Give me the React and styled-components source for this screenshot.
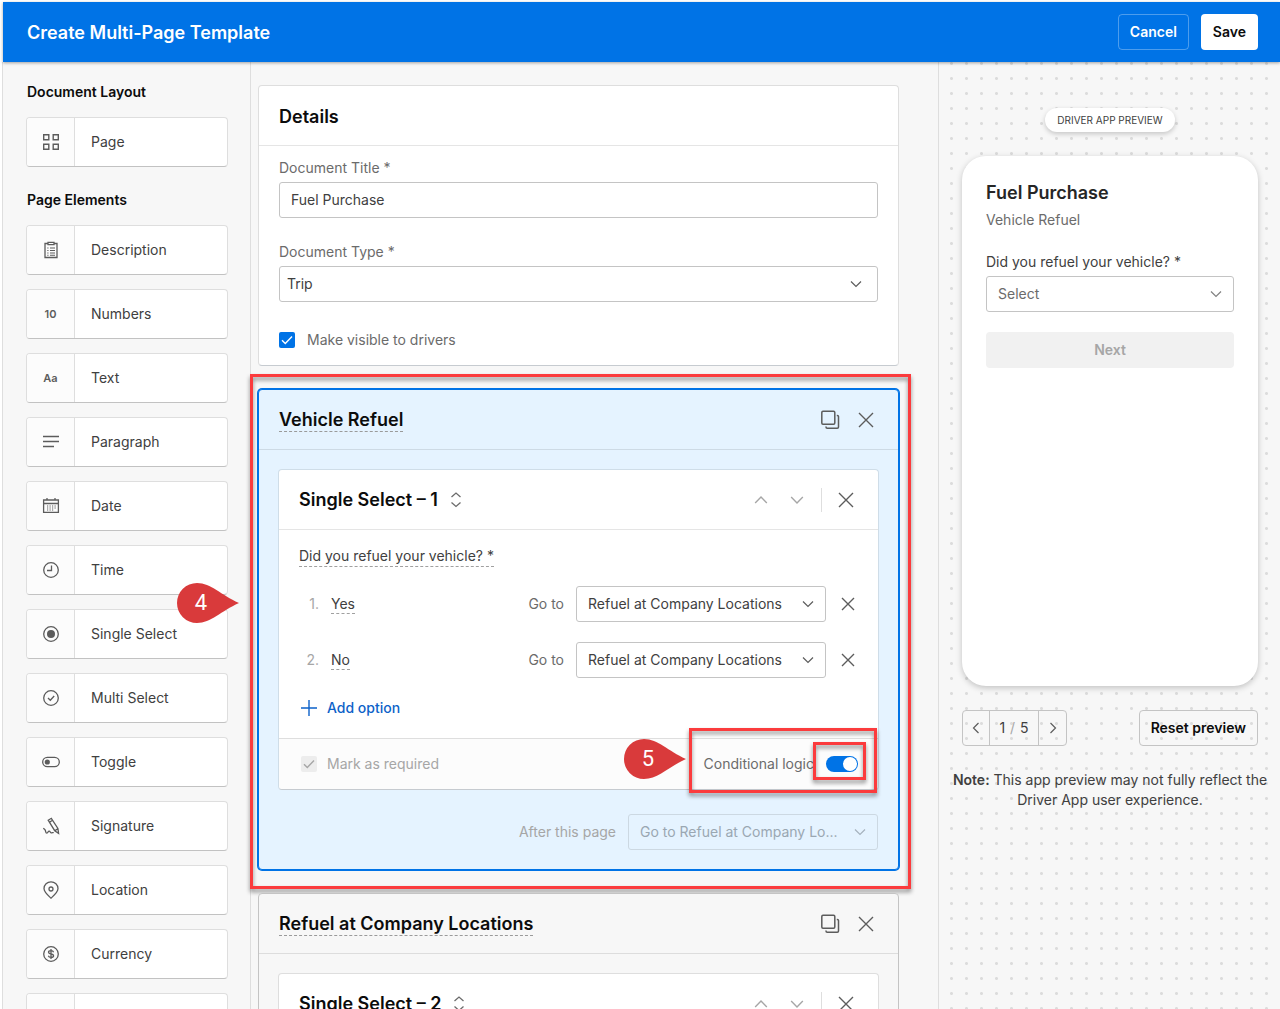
import { useState } from 'react'
import { createGlobalStyle, styled } from 'styled-components'

const colors = {
	blue: '#0073e6',
	link: '#0d62c9',
	tint: '#e5f3ff',
	page: '#f7f7f7',
	line: '#dedede',
	control: '#c4c4c4',
	ink: '#0c0c0c',
	text: '#404040',
	muted: '#6b6b6b',
	faint: '#a6a6a6',
	mark: '#fb3b3d',
}

const GlobalStyle = createGlobalStyle`
	*, *::before, *::after {
		box-sizing: border-box;
	}
	body {
		margin: 0;
		background: #fff;
		color: ${colors.text};
		font: 14px/20px Inter, "Liberation Sans", sans-serif;
	}
	button, input, select {
		font: inherit;
		color: inherit;
	}
	h1, h2, h3, h4, p, ul, ol {
		margin: 0;
		padding: 0;
	}
`

const Shell = styled.div`
	display: flex;
	flex-direction: column;
	height: 100vh;
	padding: 2px 0 0 3px;
	overflow: hidden;
`

const TopBar = styled.header`
	position: relative;
	z-index: 3;
	flex: none;
	display: flex;
	align-items: center;
	gap: 12px;
	height: 60px;
	padding: 0 22px 0 24px;
	background: ${colors.blue};
	box-shadow: 0 1px 3px hsla(0, 0%, 0%, 0.35);
`

const PageTitle = styled.h1`
	flex: 1;
	padding-top: 2px;
	color: #fff;
	font-size: 18px;
	font-weight: 600;
	line-height: 24px;
`

const Button = styled.button`
	height: 36px;
	padding: 0 11px;
	border: 1px solid ${({ $border }) => $border || 'transparent'};
	border-radius: 4px;
	background: ${({ $background }) => $background || 'transparent'};
	color: ${({ $color }) => $color || colors.ink};
	font-weight: 600;
	cursor: pointer;
	&:disabled {
		cursor: default;
	}
`

const Columns = styled.div`
	flex: 1;
	display: flex;
	min-height: 0;
	background: ${colors.page};
`

const Sidebar = styled.aside`
	flex: none;
	width: 249px;
	margin-left: -1px;
	padding: 20px 22px 0 23px;
	border: solid ${colors.line};
	border-width: 0 1px;
`

const SidebarTitle = styled.h2`
	padding-left: 1px;
	color: ${colors.ink};
	font-size: 14px;
	font-weight: 600;
	line-height: 20px;
`

const ElementList = styled.ul`
	display: grid;
	gap: 14px;
	padding: 15px 0 23px;
	list-style: none;
`

const ElementButton = styled.button`
	display: flex;
	width: 100%;
	height: 50px;
	padding: 0;
	border: 1px solid ${colors.line};
	border-bottom-color: #c2c2c2;
	border-radius: 4px;
	background: #fff;
	text-align: left;
	overflow: hidden;
	cursor: grab;
`

const ElementIcon = styled.span`
	display: grid;
	place-items: center;
	width: 48px;
	height: 100%;
	border-right: 1px solid ${colors.line};
	background: #fcfcfc;
	color: #5c5c5c;
	font-size: 11px;
	font-weight: 600;
`

const ElementName = styled.span`
	align-self: center;
	padding-left: 16px;
`

const Editor = styled.main`
	position: relative;
	z-index: 1;
	flex: 1;
	min-width: 0;
	display: flex;
	flex-direction: column;
	gap: 23px;
	padding: 23px 39px 0 7px;
`

const Card = styled.section`
	position: relative;
	flex: none;
	border: 1px solid ${({ $selected }) => ($selected ? '#cfdde8' : colors.line)};
	border-bottom-color: #c6cbd0;
	border-radius: 4px;
	background: #fff;
`

const PageCard = styled(Card)`
	border-color: ${({ $selected }) => ($selected ? colors.blue : '#c4c4c4')};
	background: ${({ $selected }) => ($selected ? colors.tint : colors.page)};
	box-shadow: ${({ $selected }) => ($selected ? `0 0 0 1px ${colors.blue}` : 'none')};
`

const CardHeader = styled.header`
	display: flex;
	align-items: center;
	gap: 12px;
	height: 60px;
	padding: 0 20px;
	border-bottom: 1px solid hsla(0, 0%, 0%, 0.1);
`

const CardTitle = styled.h2`
	padding-top: 2px;
	color: ${colors.ink};
	font-size: 18px;
	font-weight: 600;
	line-height: 24px;
`

const FieldTitle = styled(CardTitle)`
	padding-top: 0;
`

const EditableTitle = styled(CardTitle)`
	border-bottom: 1px dashed #9a9a9a;
	line-height: 22px;
`

const Actions = styled.div`
	display: flex;
	align-items: center;
	gap: 12px;
	margin-left: auto;
`

const Separator = styled.span`
	width: 1px;
	height: 24px;
	background: ${colors.line};
`

const IconButton = styled.button`
	display: grid;
	place-items: center;
	width: ${({ $width }) => $width || '24px'};
	height: 24px;
	padding: 0;
	border: 0;
	background: transparent;
	color: ${({ $color }) => $color || '#5c5c5c'};
	cursor: pointer;
`

const DetailsForm = styled.form`
	display: grid;
	padding: 12px 20px 15px;
`

const Label = styled.label`
	padding-bottom: 4px;
	color: ${({ $color }) => $color || colors.muted};
`

const TextInput = styled.input`
	width: 100%;
	height: 36px;
	margin-bottom: 24px;
	padding: 0 11px 1px;
	border: 1px solid ${colors.control};
	border-radius: 3px;
	background: #fff;
`

const SelectWrap = styled.span`
	display: grid;
	align-items: center;
	width: ${({ $width }) => $width || '100%'};
	color: ${({ $color }) => $color || colors.text};
	& > * {
		grid-area: 1 / 1;
	}
	svg {
		justify-self: end;
		margin-right: ${({ $inset }) => $inset || '12px'};
		opacity: 0.85;
		pointer-events: none;
	}
`

const SelectBox = styled.select`
	appearance: none;
	width: 100%;
	height: 36px;
	padding: 0 32px 0 ${({ $indent }) => $indent || '11px'};
	border: 1px solid ${({ $border }) => $border || colors.control};
	border-radius: 3px;
	background: transparent;
	opacity: 1;
`

const CheckLabel = styled.label`
	display: flex;
	align-items: center;
	gap: ${({ $gap }) => $gap || '12px'};
	color: ${({ $color }) => $color || colors.muted};
`

const VisibleLabel = styled(CheckLabel)`
	margin-top: 28px;
`

const CheckMark = styled.span`
	display: grid;
	place-items: center;
	width: ${({ $slot }) => $slot || '16px'};
	& > * {
		grid-area: 1 / 1;
	}
	svg {
		pointer-events: none;
	}
`

const CheckInput = styled.input`
	appearance: none;
	width: 16px;
	height: 16px;
	margin: 0;
	border-radius: 2px;
	background: ${({ disabled }) => (disabled ? '#ededed' : colors.blue)};
`

const PageBody = styled.div`
	padding: 19px;
`

const FieldBody = styled.div`
	padding: 16px 20px 20px;
`

const Question = styled.p`
	width: fit-content;
	border-bottom: 1px dashed #a0a0a0;
`

const Options = styled.ol`
	display: grid;
	gap: 20px;
	padding: 19px 0 20px;
	list-style: none;
`

const OptionRow = styled.li`
	display: flex;
	align-items: center;
	gap: 12px;
`

const OptionNumber = styled.span`
	width: 20px;
	color: ${colors.faint};
	text-align: right;
`

const OptionName = styled.span`
	border-bottom: 1px dashed #a0a0a0;
	line-height: 18px;
`

const GoTo = styled.label`
	display: flex;
	align-items: center;
	gap: 12px;
	margin-left: auto;
	color: ${({ $color }) => $color || colors.muted};
`

const AddButton = styled.button`
	display: flex;
	align-items: center;
	gap: 8px;
	height: 20px;
	padding: 0;
	border: 0;
	background: transparent;
	color: ${colors.link};
	font-weight: 500;
	cursor: pointer;
`

const FieldFooter = styled.footer`
	position: relative;
	display: flex;
	align-items: center;
	justify-content: space-between;
	height: 51px;
	padding: 0 20px;
	border-top: 1px solid ${colors.line};
	border-radius: 0 0 4px 4px;
	background: #fcfcfc;
`

const Switch = styled.input`
	appearance: none;
	display: flex;
	justify-content: flex-start;
	width: 32px;
	height: 16px;
	margin: 0;
	padding: 1px;
	border-radius: 8px;
	background: ${colors.control};
	&::before {
		content: '';
		width: 14px;
		height: 14px;
		border-radius: 50%;
		background: #fff;
	}
	&:checked {
		justify-content: flex-end;
		background: ${colors.blue};
	}
`

const AfterPage = styled.div`
	display: flex;
	margin: 24px 1px 0;
`

/* tutorial marks laid over the editor */
const Highlight = styled.span`
	position: absolute;
	inset: ${({ $inset }) => $inset};
	width: ${({ $width }) => $width || 'auto'};
	border: 3px solid ${colors.mark};
	filter: drop-shadow(0 3px 2px hsla(0, 0%, 0%, 0.45));
	pointer-events: none;
`

const Callout = styled.span`
	position: absolute;
	top: ${({ $top }) => $top};
	left: ${({ $left }) => $left};
	right: ${({ $right }) => $right};
	display: grid;
	width: 62px;
	height: 40px;
	color: #fff;
	font: 22px/40px Roboto, "Liberation Sans", sans-serif;
	pointer-events: none;
	& > * {
		grid-area: 1 / 1;
	}
	b {
		width: 48px;
		font-weight: 400;
		text-align: center;
	}
`

const Preview = styled.aside`
	flex: none;
	display: flex;
	flex-direction: column;
	align-items: center;
	width: 342px;
	padding: 46px 12px 0 13px;
	border-left: 1px solid ${colors.line};
	background: radial-gradient(circle, #dcdcdc 1px, transparent 2px) 5px -6px / 15px 15px;
`

const Badge = styled.p`
	padding: 0 12px;
	border-radius: 12px;
	background: #fff;
	font-size: 10px;
	line-height: 24px;
	box-shadow: 0 2px 5px hsla(0, 0%, 0%, 0.2);
`

const Phone = styled.section`
	display: flex;
	flex-direction: column;
	width: 296px;
	height: 530px;
	margin-top: 24px;
	padding: 24px;
	border-radius: 24px;
	background: #fff;
	box-shadow: 0 2px 6px hsla(0, 0%, 0%, 0.22);
`

const PhoneTitle = styled.h3`
	padding-top: 1px;
	color: #262626;
	font-size: 18px;
	font-weight: 600;
	line-height: 24px;
`

const PhoneSubtitle = styled.p`
	padding: 5px 0 22px;
	color: ${colors.muted};
`

const NextButton = styled(Button)`
	margin-top: 20px;
`

const PreviewControls = styled.div`
	display: flex;
	justify-content: space-between;
	width: 296px;
	padding: 24px 0;
`

const Pager = styled.div`
	display: flex;
	align-items: center;
	height: 36px;
	border: 1px solid ${colors.control};
	border-radius: 4px;
`

const PageCount = styled.span`
	width: 50px;
	border: solid ${colors.control};
	border-width: 0 1px;
	line-height: 34px;
	text-align: center;
	i {
		margin: 0 1px;
		color: ${colors.faint};
		font-style: normal;
	}
`

const Note = styled.p`
	text-align: center;
	b {
		font-weight: 600;
	}
`

const Icon = ({ size = 18, stroke = 1.3, children }) => (
	<svg
		width={size}
		height={size}
		viewBox={`0 0 ${size} ${size}`}
		fill="none"
		stroke="currentColor"
		strokeWidth={stroke}
		aria-hidden="true"
	>
		{children}
	</svg>
)

const Chevron = ({ direction = 'down', size = 12 }) => {
	const paths = {
		down: 'M1 3.5l5 5 5-5',
		up: 'M1 8.5l5-5 5 5',
		left: 'M8.5 1l-5 5 5 5',
		right: 'M3.5 1l5 5-5 5',
	}
	return (
		<svg
			width={size}
			height={size}
			viewBox="0 0 12 12"
			fill="none"
			stroke="currentColor"
			strokeWidth="1.2"
			aria-hidden="true"
		>
			<path d={paths[direction]} />
		</svg>
	)
}

const CrossIcon = ({ size = 16 }) => (
	<Icon size={size} stroke={1.4}>
		<path d={`M1 1L${size - 1} ${size - 1}M${size - 1} 1L1 ${size - 1}`} />
	</Icon>
)

const CopyIcon = () => (
	<Icon size={20} stroke={1.5}>
		<rect x="1.8" y="1.2" width="13" height="13" rx="1.2" />
		<path d="M16.8 5.4h.5c.7 0 1.2.5 1.2 1.2v10.500c0 .7-.5 1.200-1.200 1.200H7.200c-.7 0-1.200-.5-1.200-1.200v-.5" />
	</Icon>
)

const SortIcon = () => (
	<svg
		width="12"
		height="16"
		viewBox="0 0 12 16"
		fill="none"
		stroke="#6b6b6b"
		strokeWidth="1.3"
		aria-hidden="true"
	>
		<path d="M1.5 5L6 1l4.5 4M1.5 10.500L6 14.500l4.500-4" />
	</svg>
)

const CheckIcon = ({ color }) => (
	<svg width="16" height="16" viewBox="0 0 16 16" fill="none" stroke={color} strokeWidth="1.4">
		<path d="M3 8.200l3.300 3.300L13 4.500" />
	</svg>
)

const icons = {
	page: (
		<Icon stroke={1.4}>
			<path d="M1.700 1.700h5.100v5.100H1.700zM11.200 1.700h5.100v5.100h-5.100zM1.700 11.200h5.100v5.100H1.700zM11.200 11.200h5.100v5.100h-5.100z" />
		</Icon>
	),
	description: (
		<Icon>
			<path d="M6 2.500H3v14h12v-14h-3" />
			<path d="M6 1.300h6v2.400H6z" />
			<path
				d="M5.300 7h1.200M8 7h5M5.300 9.500h1.200M8 9.500h5M5.300 12h1.200M8 12h5M5.300 14.300h1.200M8 14.300h5"
				strokeWidth="1.1"
			/>
		</Icon>
	),
	paragraph: (
		<Icon stroke={1.5}>
			<path d="M1 3.500h16M1 8.500h16M1 13.500h11" />
		</Icon>
	),
	date: (
		<Icon>
			<path d="M1.600 3h14.800v12.400H1.600zM1.600 6.500h14.800M5 1v2M13 1v2" />
			<path
				d="M5 9h1.200M7.500 9h1.200M10 9h1.200M12.500 9h1.200M5 11h1.200M7.500 11h1.200M10 11h1.200M12.500 11h1.200M5 13h1.200M7.500 13h1.200M10 13h1.200"
				strokeWidth="1.2"
			/>
		</Icon>
	),
	time: (
		<Icon>
			<circle cx="9" cy="9" r="7.300" />
			<path d="M9.500 4.500v5H5" />
		</Icon>
	),
	single: (
		<Icon>
			<circle cx="9" cy="9" r="7.300" />
			<circle cx="9" cy="9" r="4" fill="currentColor" stroke="none" />
		</Icon>
	),
	multi: (
		<Icon>
			<circle cx="9" cy="9" r="7.300" />
			<path d="M6 9l2.300 2.200L12.200 7" />
		</Icon>
	),
	toggle: (
		<Icon>
			<rect x="0.700" y="4.300" width="16.600" height="9.400" rx="4.700" />
			<circle cx="5.300" cy="9" r="2.600" fill="currentColor" stroke="none" />
		</Icon>
	),
	signature: (
		<Icon>
			<path d="M6.200 3.200L9.300 1.300 15.900 11.500 16.600 16.300 12.700 13.700zM7.500 5.300l3-2M13 13.600l2.800-1.900" />
			<path d="M1.300 11.300l1.500 1.300c1.400 1.300.3 3.500 2 3.500 1.500 0 1-2 2.300-2s1 1.800 2.300 1.800c1 0 1.300-.6 2.300-.2" />
		</Icon>
	),
	location: (
		<Icon>
			<path d="M9 17.200c-3-2.700-7-6-7-9.600a7 6.800 0 0 1 14 0c0 3.600-4 6.900-7 9.600z" />
			<circle cx="9" cy="8" r="2" />
		</Icon>
	),
	currency: (
		<Icon>
			<circle cx="9" cy="9" r="7.300" />
			<path d="M11.600 7.200C11.200 6 10.200 5.600 9 5.600c-1.400 0-2.500.6-2.500 1.700 0 2.500 5.100.9 5.100 3.400 0 1.100-1.200 1.700-2.600 1.700-1.300 0-2.300-.5-2.700-1.700M9 4v10" />
		</Icon>
	),
	attachment: (
		<Icon>
			<path d="M15 8l-6.500 7a3.500 3.500 0 0 1-5-5L10 1.500a2.400 2.400 0 0 1 3.500 3.500L7.500 12" />
		</Icon>
	),
}

const pageElements = [
	{ name: 'Description', icon: icons.description },
	{ name: 'Numbers', icon: '10' },
	{ name: 'Text', icon: 'Aa' },
	{ name: 'Paragraph', icon: icons.paragraph },
	{ name: 'Date', icon: icons.date },
	{ name: 'Time', icon: icons.time },
	{ name: 'Single Select', icon: icons.single },
	{ name: 'Multi Select', icon: icons.multi },
	{ name: 'Toggle', icon: icons.toggle },
	{ name: 'Signature', icon: icons.signature },
	{ name: 'Location', icon: icons.location },
	{ name: 'Currency', icon: icons.currency },
	{ label: 'Attachment', icon: icons.attachment },
]

const ElementItem = ({ name, label, icon }) => (
	<li>
		<ElementButton type="button" aria-label={label}>
			<ElementIcon aria-hidden="true">{icon}</ElementIcon>
			<ElementName>{name}</ElementName>
		</ElementButton>
	</li>
)

const Select = ({ value, width, color, inset, indent, border, ...rest }) => (
	<SelectWrap $width={width} $color={color} $inset={inset}>
		<SelectBox $indent={indent} $border={border} {...rest}>
			<option>{value}</option>
		</SelectBox>
		<Chevron />
	</SelectWrap>
)

const Pin = ({ children, ...rest }) => (
	<Callout {...rest}>
		<svg width="62" height="40" viewBox="0 0 62 40" aria-hidden="true">
			<path d="M20 0C34 0 44 12 62 20C44 28 34 40 20 40A20 20 0 0 1 20 0z" fill="#d93a3b" />
		</svg>
		<b>{children}</b>
	</Callout>
)

const PageHeader = ({ title }) => (
	<CardHeader>
		<EditableTitle>{title}</EditableTitle>
		<Actions>
			<IconButton type="button" aria-label="Duplicate page">
				<CopyIcon />
			</IconButton>
			<IconButton type="button" aria-label="Remove page">
				<CrossIcon />
			</IconButton>
		</Actions>
	</CardHeader>
)

const FieldHeader = ({ title }) => (
	<CardHeader>
		<FieldTitle as="h3">{title}</FieldTitle>
		<SortIcon />
		<Actions>
			<IconButton type="button" aria-label="Move up" $color={colors.faint}>
				<Chevron direction="up" size={14} />
			</IconButton>
			<IconButton type="button" aria-label="Move down" $color={colors.faint}>
				<Chevron size={14} />
			</IconButton>
			<Separator />
			<IconButton type="button" aria-label="Remove field">
				<CrossIcon />
			</IconButton>
		</Actions>
	</CardHeader>
)

const Option = ({ number, name }) => (
	<OptionRow>
		<OptionNumber>{number}.</OptionNumber>
		<OptionName>{name}</OptionName>
		<GoTo>
			Go to
			<Select value="Refuel at Company Locations" width="250px" />
		</GoTo>
		<IconButton type="button" aria-label={`Remove ${name}`} $width="20px">
			<CrossIcon size={14} />
		</IconButton>
	</OptionRow>
)

export default function App() {
	const [title, setTitle] = useState('Fuel Purchase')
	const [visible, setVisible] = useState(true)
	const [conditional, setConditional] = useState(true)

	return (
		<Shell>
			<GlobalStyle />
			<TopBar>
				<PageTitle>Create Multi-Page Template</PageTitle>
				<Button type="button" $color="#fff" $border="hsla(0, 0%, 100%, 0.3)">
					Cancel
				</Button>
				<Button type="button" $background="#fff">
					Save
				</Button>
			</TopBar>
			<Columns>
				<Sidebar>
					<SidebarTitle>Document Layout</SidebarTitle>
					<ElementList>
						<ElementItem name="Page" icon={icons.page} />
					</ElementList>
					<SidebarTitle>Page Elements</SidebarTitle>
					<ElementList>
						{pageElements.map((element) => (
							<ElementItem key={element.name || element.label} {...element} />
						))}
					</ElementList>
				</Sidebar>

				<Editor>
					<Card>
						<CardHeader>
							<CardTitle>Details</CardTitle>
						</CardHeader>
						<DetailsForm>
							<Label htmlFor="title">Document Title *</Label>
							<TextInput
								id="title"
								value={title}
								onChange={(event) => setTitle(event.target.value)}
							/>
							<Label htmlFor="type">Document Type *</Label>
							<Select id="type" value="Trip" inset="16px" indent="7px" />
							<VisibleLabel>
								<CheckMark>
									<CheckInput
										type="checkbox"
										checked={visible}
										onChange={() => setVisible(!visible)}
									/>
									{visible && <CheckIcon color="#fff" />}
								</CheckMark>
								Make visible to drivers
							</VisibleLabel>
						</DetailsForm>
					</Card>

					<PageCard $selected>
						<PageHeader title="Vehicle Refuel" />
						<PageBody>
							<Card $selected>
								<FieldHeader title="Single Select – 1" />
								<FieldBody>
									<Question>Did you refuel your vehicle? *</Question>
									<Options>
										<Option number={1} name="Yes" />
										<Option number={2} name="No" />
									</Options>
									<AddButton type="button">
										<Icon size={20} stroke={1.4}>
											<path d="M10 2v16M2 10h16" />
										</Icon>
										Add option
									</AddButton>
								</FieldBody>
								<FieldFooter>
									<CheckLabel $gap="8px" $color={colors.faint}>
										<CheckMark $slot="20px">
											<CheckInput type="checkbox" checked disabled readOnly />
											<CheckIcon color={colors.faint} />
										</CheckMark>
										Mark as required
									</CheckLabel>
									<CheckLabel>
										Conditional logic
										<Switch
											type="checkbox"
											role="switch"
											checked={conditional}
											onChange={() => setConditional(!conditional)}
										/>
									</CheckLabel>
									<Highlight $inset="-11px 1px -4px auto" $width="188px" />
									<Highlight $inset="3px 12px 9px auto" $width="53px" />
									<Pin $top="0" $right="192px">
										5
									</Pin>
								</FieldFooter>
							</Card>
							<AfterPage>
								<GoTo $color={colors.faint}>
									After this page
									<Select
										value="Go to Refuel at Company Lo..."
										width="250px"
										color="#9aa7b2"
										border="#ccd8e2"
										disabled
									/>
								</GoTo>
							</AfterPage>
						</PageBody>
						<Highlight $inset="-16px -13px -20px -9px" />
						<Pin $top="193px" $left="-82px">
							4
						</Pin>
					</PageCard>

					<PageCard>
						<PageHeader title="Refuel at Company Locations" />
						<PageBody>
							<Card>
								<FieldHeader title="Single Select – 2" />
							</Card>
						</PageBody>
					</PageCard>
				</Editor>

				<Preview>
					<Badge>DRIVER APP PREVIEW</Badge>
					<Phone>
						<PhoneTitle>{title}</PhoneTitle>
						<PhoneSubtitle>Vehicle Refuel</PhoneSubtitle>
						<Label htmlFor="answer" $color={colors.text}>
							Did you refuel your vehicle? *
						</Label>
						<Select id="answer" value="Select" color={colors.muted} />
						<NextButton type="button" disabled $background="#f1f1f1" $color={colors.faint}>
							Next
						</NextButton>
					</Phone>
					<PreviewControls>
						<Pager>
							<IconButton type="button" aria-label="Previous page" $width="26px">
								<Chevron direction="left" />
							</IconButton>
							<PageCount>
								1 <i>/</i> 5
							</PageCount>
							<IconButton type="button" aria-label="Next page" $width="27px">
								<Chevron direction="right" />
							</IconButton>
						</Pager>
						<Button type="button" $border={colors.control}>
							Reset preview
						</Button>
					</PreviewControls>
					<Note>
						<b>Note:</b> This app preview may not fully reflect the Driver App user experience.
					</Note>
				</Preview>
			</Columns>
		</Shell>
	)
}
